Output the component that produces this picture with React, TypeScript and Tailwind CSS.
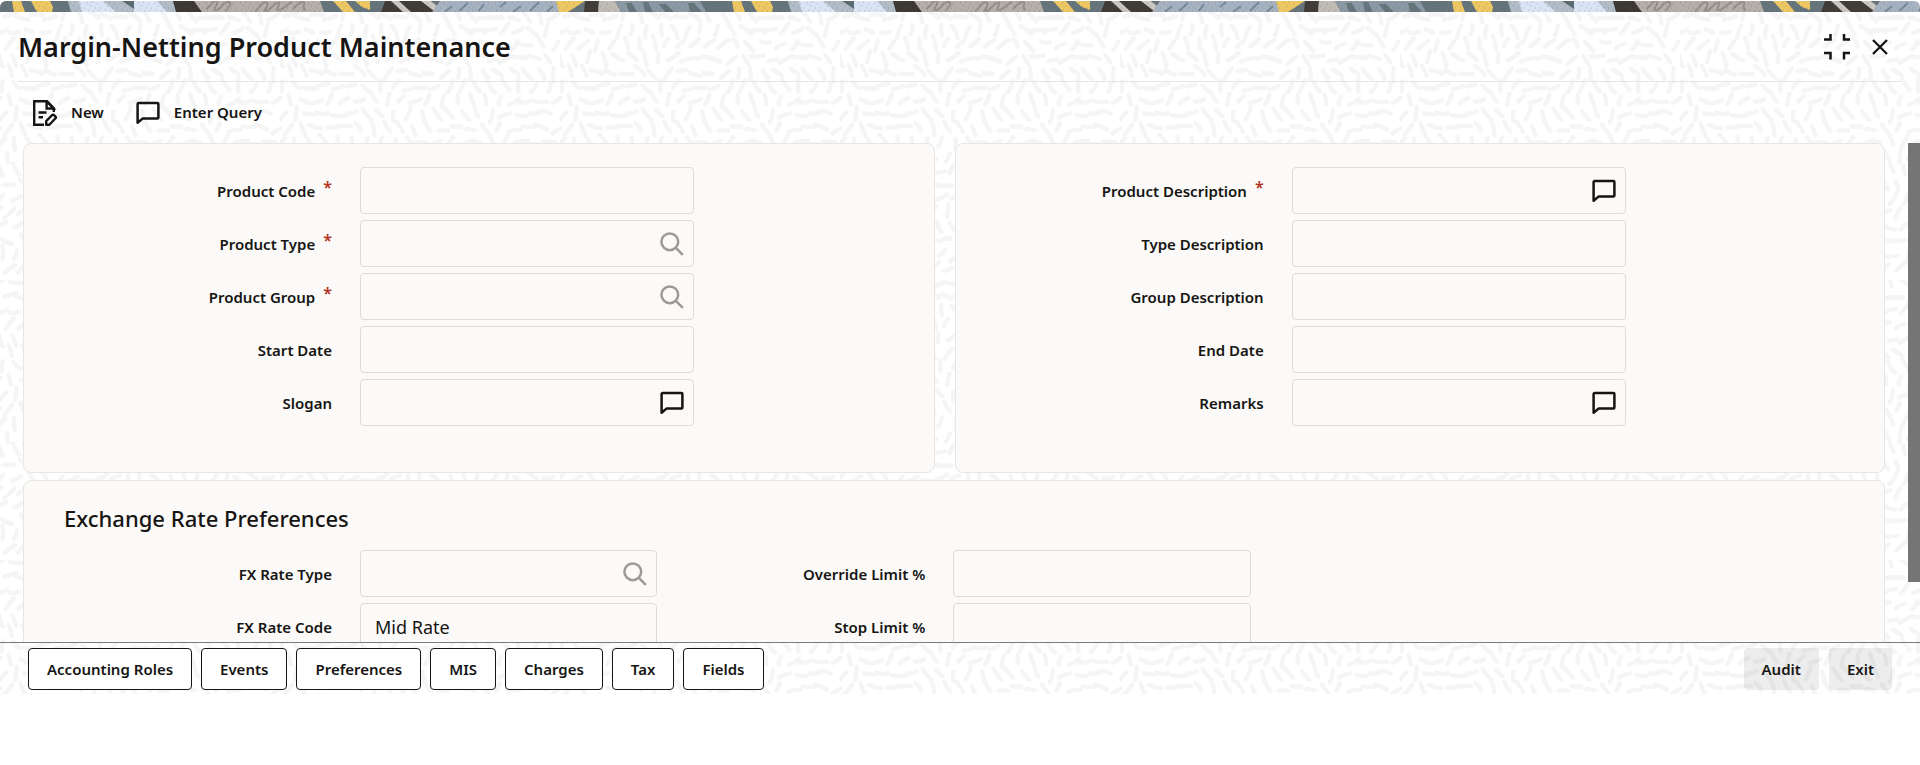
import { useId } from "react";
import { clsx } from "clsx";

type FieldIcon = "search" | "chat";

interface FieldDef {
  label: string;
  required?: boolean;
  icon?: FieldIcon;
  value?: string;
}

const LEFT_FIELDS: FieldDef[] = [
  { label: "Product Code", required: true },
  { label: "Product Type", required: true, icon: "search" },
  { label: "Product Group", required: true, icon: "search" },
  { label: "Start Date" },
  { label: "Slogan", icon: "chat" },
];

const RIGHT_FIELDS: FieldDef[] = [
  { label: "Product Description", required: true, icon: "chat" },
  { label: "Type Description" },
  { label: "Group Description" },
  { label: "End Date" },
  { label: "Remarks", icon: "chat" },
];

const RATE_FIELDS: FieldDef[] = [
  { label: "FX Rate Type", icon: "search" },
  { label: "FX Rate Code", value: "Mid Rate" },
];

const LIMIT_FIELDS: FieldDef[] = [
  { label: "Override Limit %" },
  { label: "Stop Limit %" },
];

const SUBSCREENS = [
  "Accounting Roles",
  "Events",
  "Preferences",
  "MIS",
  "Charges",
  "Tax",
  "Fields",
];

const TILE = 280;

// Short strokes following a slowly turning field, one per jittered grid cell
function buildDashes() {
  let seed = 11;
  const rand = () => {
    seed = (seed * 16807) % 2147483647;
    return seed / 2147483647;
  };
  const step = 14;
  const k = (2 * Math.PI) / TILE;
  const parts: string[] = [];
  for (let row = 0; row < TILE / step; row++) {
    for (let col = 0; col < TILE / step; col++) {
      const x = col * step + (row % 2) * 7 + rand() * 4;
      const y = row * step + rand() * 5;
      const a =
        1.1 * Math.sin(k * (2 * x + y)) +
        1.1 * Math.cos(k * (2 * y - x)) +
        (rand() - 0.5) * 0.9 +
        1.4;
      const len = 4 + rand() * 3;
      const dx = Math.cos(a) * len;
      const dy = Math.sin(a) * len;
      const bend = (rand() - 0.5) * 4;
      for (const ox of [0, -TILE]) {
        for (const oy of [0, -TILE]) {
          const cx = x + ox;
          const cy = y + oy;
          if (cx < -12 || cy < -12) continue;
          parts.push(
            `M${(cx - dx).toFixed(1)} ${(cy - dy).toFixed(1)}Q${(cx - (dy * bend) / len).toFixed(1)} ${(cy + (dx * bend) / len).toFixed(1)} ${(cx + dx).toFixed(1)} ${(cy + dy).toFixed(1)}`
          );
        }
      }
    }
  }
  return parts.join("");
}

const DASHES = buildDashes();

function Texture() {
  return (
    <svg className="absolute inset-0 h-full w-full" aria-hidden="true">
      <defs>
        <pattern id="dashes" width={TILE} height={TILE} patternUnits="userSpaceOnUse">
          <path d={DASHES} fill="none" stroke="#f5f5f5" strokeWidth="4.4" strokeLinecap="round" />
        </pattern>
      </defs>
      <rect width="100%" height="100%" fill="url(#dashes)" />
    </svg>
  );
}

function Banner() {
  return (
    <svg className="mt-px block h-[11px] w-full rounded-t-md" aria-hidden="true">
      <defs>
        <pattern id="speckle" width="17" height="11" patternUnits="userSpaceOnUse">
          <path
            d="M2 2h1M7 1h1M12 3h1M15 7h1M5 5h1M10 7h1M3 9h1M8 10h1M13 10h1"
            stroke="#3a3f3f"
            strokeOpacity="0.3"
          />
        </pattern>
        <pattern id="strip" width="720" height="11" patternUnits="userSpaceOnUse">
          <rect width="720" height="11" fill="#65757b" />
          <path d="M12 0h9l4 11H14zM31 0h19l3 6-1 5H37zM333 0h13l9 11h-12zM355 0h15v9l-8-3z" fill="#edc763" />
          <path d="M68 0h106l4 11H71z" fill="#b2bcc7" />
          <path d="M79 0h24l13 11H82zM134 0h23l10 11h-33z" fill="#dae3f3" />
          <path d="M122 0h12v8z" fill="#5d6c73" />
          <path d="M173 0h21l8 11h-26z" fill="#3d3833" />
          <path d="M194 0h126l4 11H202z" fill="#b6aea8" />
          <path
            d="M206 8c5-3 8-10 11-8s-6 9-1 9 8-10 13-8-5 8-2 9M255 11c4-5 9-12 12-9s-5 8-1 8 8-9 12-8-4 7 1 7 9-7 13-8M293 8c5-4 6-8 10-7s-3 7 3 8"
            fill="none"
            stroke="#968e88"
            strokeWidth="2"
          />
          <path d="M385 0h47l4 11h-55z" fill="#413c37" />
          <path d="M391 0h8l12 11h-8zM421 0h10l7 6-4 4z" fill="#cbc6c1" />
          <path d="M440 0h116l4 11H432z" fill="#a6b2c0" />
          <path
            d="M452 5l-7 6M468 2l-9 8M484 3l-5 7M506 1l-6 5M521 5l-8 6M539 1l-9 9M553 5l-6 6"
            stroke="#788898"
            strokeWidth="2"
          />
          <path d="M556 0h29l-17 11h-9z" fill="#edc763" />
          <path d="M585 0h14l-1 11h-14z" fill="#413c37" />
          <path d="M599 0h16l6 11h-23z" fill="#c1bbb5" />
          <path d="M615 0h85l6 11h-85z" fill="#8c99a5" />
          <path d="M626 2h6l5 9h-8zM643 1h5l5 10h-8zM659 3h7l8 8h-9zM688 2h6l8 9h-12z" fill="#65757b" />
          <rect width="720" height="11" fill="url(#speckle)" />
        </pattern>
      </defs>
      <rect width="100%" height="11" fill="url(#strip)" />
    </svg>
  );
}

function ChatIcon() {
  return (
    <svg viewBox="0 0 24 24" className="h-6 w-6" fill="none" stroke="currentColor" strokeWidth="2.5" strokeLinejoin="round">
      <path d="M1.6 3a1 1 0 0 1 1-1h18.8a1 1 0 0 1 1 1v13.4a1 1 0 0 1-1 1H6.8L1.6 21.8z" />
    </svg>
  );
}

function SearchIcon() {
  return (
    <svg viewBox="0 0 24 24" className="h-6 w-6" fill="none" stroke="currentColor" strokeWidth="2.5">
      <circle cx="9.8" cy="9.8" r="8.4" />
      <path d="M15.6 15.6l7.2 7.2" />
    </svg>
  );
}

function NewIcon() {
  return (
    <svg viewBox="0 0 24 26" className="h-[26px] w-6" fill="none" stroke="currentColor" strokeWidth="2.4">
      <path d="M11 24.8H1.2V1.2H14l6.8 7V12" />
      <path d="M13.6 1.5v7h7z" />
      <path d="M5.5 12.5h8M5.5 17.3h4.5" />
      <path d="M13.2 24.8v-3.6l6-6.2a1.2 1.2 0 0 1 1.7 0l1.6 1.6a1.2 1.2 0 0 1 0 1.7l-6.1 6.5z" strokeLinejoin="round" />
    </svg>
  );
}

function CollapseIcon() {
  return (
    <svg viewBox="0 0 26 26" className="h-[26px] w-[26px]" fill="none" stroke="currentColor" strokeWidth="2.5">
      <path d="M0 5.5h6.5V0M20 0v5.5h6M0 19h6.5v6.5M20 25.5V19h6" />
    </svg>
  );
}

function CloseIcon() {
  return (
    <svg viewBox="0 0 16 16" className="h-4 w-4" fill="none" stroke="currentColor" strokeWidth="2.3">
      <path d="M1 1l14 14M15 1L1 15" />
    </svg>
  );
}

function Field({ field, narrow }: { field: FieldDef; narrow?: boolean }) {
  const id = useId();
  return (
    <div className="flex items-center gap-7">
      <label htmlFor={id} className="w-[268px] shrink-0 text-right text-[15px] leading-5 font-semibold">
        {field.label}
        {field.required && (
          <span className="relative -top-1 ml-2 text-base leading-none font-semibold text-[#b3311f]">*</span>
        )}
      </label>
      <div className={clsx("relative flex-1", !narrow && "max-w-[334px]")}>
        <input
          id={id}
          type="text"
          readOnly
          defaultValue={field.value}
          className="block h-[47px] w-full rounded border border-[#dddcda] bg-transparent px-3.5 text-lg outline-none"
        />
        {field.icon && (
          <button
            type="button"
            aria-label={field.icon === "search" ? `Search ${field.label}` : `Edit ${field.label}`}
            className={clsx(
              "absolute inset-y-0 right-2.5 flex items-center",
              field.icon === "search" && "text-[#9b9a98]"
            )}
          >
            {field.icon === "search" ? <SearchIcon /> : <ChatIcon />}
          </button>
        )}
      </div>
    </div>
  );
}

function FieldColumn({ fields, narrow }: { fields: FieldDef[]; narrow?: boolean }) {
  return (
    <div className="flex flex-col gap-1.5">
      {fields.map((f) => (
        <Field key={f.label} field={f} narrow={narrow} />
      ))}
    </div>
  );
}

const PANEL = "rounded-lg border border-[#e7e6e4] bg-[#fbfaf8] px-10";

export default function App() {
  return (
    <div className="relative flex h-[calc(100vh-71px)] flex-col bg-white font-['Noto_Sans','Open_Sans',sans-serif] text-[#161513]">
      <Texture />
      <div className="relative bg-white">
        <Banner />
      </div>

      <header className="relative mx-[18px] flex h-[70px] shrink-0 items-center justify-between border-b border-[#e5e5e4] pr-3.5">
        <h1 className="text-[27px] leading-9 font-semibold">Margin-Netting Product Maintenance</h1>
        <div className="flex items-center gap-[22px]">
          <button type="button" aria-label="Collapse">
            <CollapseIcon />
          </button>
          <button type="button" aria-label="Close">
            <CloseIcon />
          </button>
        </div>
      </header>

      <div className="relative flex h-[61px] shrink-0 items-center gap-8 px-[33px] text-[15px] font-semibold">
        <button type="button" className="flex items-center gap-3.5">
          <NewIcon />
          New
        </button>
        <button type="button" className="flex items-center gap-3.5">
          <ChatIcon />
          Enter Query
        </button>
      </div>

      <main className="relative flex min-h-0 flex-1">
        <div className="flex min-w-0 flex-1 flex-col gap-[7px] overflow-hidden px-[23px]">
          <div className="grid shrink-0 grid-cols-[49fr_50fr] gap-5">
            <section className={clsx(PANEL, "pt-[23px] pb-[46px]")}>
              <FieldColumn fields={LEFT_FIELDS} />
            </section>
            <section className={clsx(PANEL, "pt-[23px] pb-[46px]")}>
              <FieldColumn fields={RIGHT_FIELDS} />
            </section>
          </div>
          <section className={clsx(PANEL, "shrink-0 pt-[23px] pb-20")}>
            <h2 className="mb-[18px] text-[22px] leading-7 font-medium">Exchange Rate Preferences</h2>
            <div className="grid grid-cols-3">
              <FieldColumn fields={RATE_FIELDS} narrow />
              <FieldColumn fields={LIMIT_FIELDS} narrow />
            </div>
          </section>
        </div>
        <div className="w-3 shrink-0">
          <div className="h-[88%] bg-[#757575]" />
        </div>
      </main>

      <footer className="relative flex shrink-0 items-center justify-between border-t border-[#7d7c7b] px-7 pt-[5px] pb-1 text-[15px] font-semibold">
        <div className="flex gap-[9px]">
          {SUBSCREENS.map((name) => (
            <button key={name} type="button" className="h-[42px] rounded border border-[#161513] bg-white px-[18px]">
              {name}
            </button>
          ))}
        </div>
        <div className="flex gap-2.5">
          {["Audit", "Exit"].map((name) => (
            <button key={name} type="button" className="h-[42px] rounded bg-black/[0.07] px-[18px]">
              {name}
            </button>
          ))}
        </div>
      </footer>
    </div>
  );
}
